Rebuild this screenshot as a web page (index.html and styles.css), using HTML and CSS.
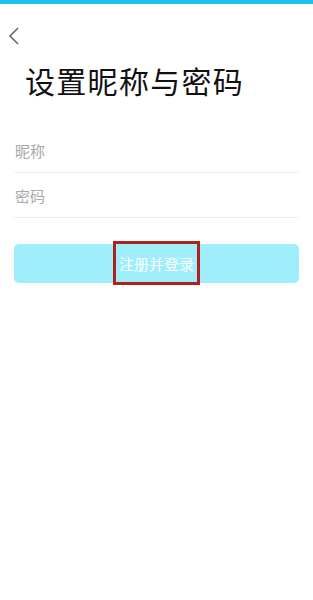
FILE: index.html
```html
<!DOCTYPE html>
<html lang="zh">
<head>
<meta charset="utf-8">
<link rel="stylesheet" href="styles.css">
</head>
<body>
<div class="topbar"></div>
<div class="page">
  <div class="nav">
    <svg class="back" width="12" height="20" viewBox="0 0 12 20"><path d="M10 2 L2 10 L10 18" fill="none" stroke="#666" stroke-width="1.6"/></svg>
  </div>
  <h1 class="title">设置昵称与密码</h1>
  <div class="form">
    <div class="field"><span class="ph">昵称</span></div>
    <div class="field"><span class="ph">密码</span></div>
  </div>
  <div class="btn"><span class="btn-label">注册并登录</span></div>
</div>
</body>
</html>
```
FILE: styles.css
```css
html, body { margin: 0; padding: 0; background: #fff; }
body { font-family: "Noto Sans CJK SC", "Noto Sans", sans-serif; width: 313px; height: 600px; overflow: hidden; }
.topbar { height: 4px; background: #1ec0ef; }
.page { padding: 0 14px; }
.nav { height: 56px; display: flex; align-items: flex-start; padding-top: 22px; box-sizing: border-box; }
.back { margin-left: -6px; }
.title { margin: 0; padding-left: 11px; font-size: 30px; font-weight: 400; color: #111; line-height: 40px; letter-spacing: 1.3px; height: 68px; white-space: nowrap; }
.form { display: flex; flex-direction: column; }
.field { height: 44px; border-bottom: 1px solid #eeeeee; display: flex; align-items: center; }
.ph { font-size: 15px; color: #a8a8a8; padding-left: 1px; }
.btn { margin-top: 26px; height: 39px; background: #9eeefb; border-radius: 5px; display: flex; justify-content: center; align-items: stretch; }
.btn-label { border: 3px solid #b3201c; margin: -3px 0 -2px; padding: 0; display: flex; align-items: center; justify-content: center; color: #fff; font-size: 15px; box-sizing: border-box; width: 87px; white-space: nowrap; }
```
